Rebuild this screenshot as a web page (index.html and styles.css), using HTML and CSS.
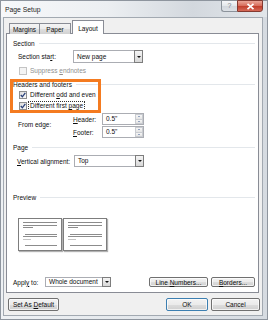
FILE: index.html
```html
<!DOCTYPE html>
<html>
<head>
<meta charset="utf-8">
<link rel="stylesheet" href="styles.css">
</head>
<body>
<div class="window">
  <div class="titlebar">
    <span class="title">Page Setup</span>
    <div class="caption">
      <div class="cbtn help">?</div>
      <div class="cbtn close">
        <svg width="9" height="7" viewBox="0 0 9 7"><path d="M1.5 0.8 L7.5 6.2 M7.5 0.8 L1.5 6.2" stroke="#fff" stroke-width="1.7" fill="none"/></svg>
      </div>
    </div>
  </div>
  <div class="client">
    <div class="tabs">
      <div class="tab t-margins">Margins</div>
      <div class="tab t-paper">Paper</div>
      <div class="tab active">Layout</div>
    </div>
    <div class="panel">
      <div class="ghead g-section">Section</div>
      <div class="row r-start">
        <span class="lbl w-start">Section sta<u>r</u>t:</span>
        <div class="select s-wide"><span class="val">New page</span><span class="arrow"></span></div>
      </div>
      <div class="row r-check r-suppress">
        <span class="cb disabled"></span><span class="cbtext dis">Suppress <u>e</u>ndnotes</span>
      </div>
      <div class="ghead g-hf">Headers and footers</div>
      <div class="row r-check r-cb1">
        <span class="cb"><svg width="6" height="6" viewBox="0 0 6 6"><path d="M0.8 3 L2.4 4.8 L5.3 0.9" stroke="#273f78" stroke-width="1.3" fill="none"/></svg></span><span class="cbtext">Different <u>o</u>dd and even</span>
      </div>
      <div class="row r-check r-cb2">
        <span class="cb"><svg width="6" height="6" viewBox="0 0 6 6"><path d="M0.8 3 L2.4 4.8 L5.3 0.9" stroke="#273f78" stroke-width="1.3" fill="none"/></svg></span><span class="cbtext focus">Different first <u>p</u>age</span>
      </div>
      <div class="edge">
        <span class="lbl w-start">From edge:</span>
        <div class="edge-rows">
          <div class="erow"><span class="lbl w-hdr"><u>H</u>eader:</span><div class="spin"><span class="val">0.5"</span><span class="spinbtns"><i class="up"></i><i class="dn"></i></span></div></div>
          <div class="erow"><span class="lbl w-hdr"><u>F</u>ooter:</span><div class="spin"><span class="val">0.5"</span><span class="spinbtns"><i class="up"></i><i class="dn"></i></span></div></div>
        </div>
      </div>
      <div class="ghead g-page">Page</div>
      <div class="row r-valign">
        <span class="lbl w-valign"><u>V</u>ertical alignment:</span>
        <div class="select s-wide s-v"><span class="val">Top</span><span class="arrow"></span></div>
      </div>
      <div class="ghead g-preview">Preview</div>
      <div class="previews">
        <div class="ppage"><svg width="42" height="31" viewBox="0 0 42 31"><g stroke-width="1" shape-rendering="crispEdges"><path d="M4 3.5H38M4 6.5H38M4 8.5H14M6 15.5H38M4 17.5H38M6 26.5H38" stroke="#8c8c8c"/><path d="M4 20.5H12" stroke="#c4c4c4"/></g></svg></div>
        <div class="ppage"><svg width="42" height="31" viewBox="0 0 42 31"><g stroke-width="1" shape-rendering="crispEdges"><path d="M4 3.5H38M4 6.5H38M4 8.5H14M6 15.5H38M4 17.5H38M6 26.5H38" stroke="#8c8c8c"/><path d="M4 20.5H12" stroke="#c4c4c4"/></g></svg></div>
      </div>
      <div class="row r-apply">
        <span class="lbl w-apply">Appl<u>y</u> to:</span>
        <div class="select s-apply"><span class="val">Whole document</span><span class="arrow"></span></div>
        <span class="grow"></span>
        <button class="btn b-line">Line <u>N</u>umbers...</button>
        <button class="btn b-borders"><u>B</u>orders...</button>
      </div>
      <div class="highlight"></div>
    </div>
    <div class="footer">
      <button class="btn b-default">Set As <u>D</u>efault</button>
      <span class="grow"></span>
      <button class="btn b-ok">OK</button>
      <button class="btn b-cancel">Cancel</button>
    </div>
  </div>
</div>
</body>
</html>
```
FILE: styles.css
```css
* { box-sizing: border-box; }
html, body { margin: 0; padding: 0; }
body {
  width: 268px; height: 320px; overflow: hidden; background: #fff;
  font-family: "Liberation Sans", Arial, sans-serif; font-size: 6.5px; color: #0e0e0e;
}
u { text-decoration-thickness: 0.6px; text-underline-offset: 1px; }
.window {
  width: 268px; height: 320px; border: 1px solid #8e959e;
  background: linear-gradient(to right, #eef1f4 0%, #e4e8ec 50%, #d6dbe1 100%);
  display: flex; flex-direction: column;
}
.titlebar {
  height: 16px; flex-shrink: 0; display: flex; align-items: flex-start;
  background: linear-gradient(to right, #f7f8fa 0%, #eceff2 40%, #d3d8de 72%, #e2e6ea 100%);
}
.title { margin: 5px 0 0 4px; font-size: 6.8px; line-height: 8px; color: #1e1e1e; }
.caption { margin-left: auto; margin-right: 4px; margin-top: -1px; display: flex; }
.cbtn { height: 12px; border: 1px solid #8c939b; }
.help {
  width: 16px; border-right: none; border-radius: 0 0 0 3px;
  background: linear-gradient(#f6f7f9, #e2e6ea 50%, #d2d7dd 51%, #dde1e6);
  color: #7a828b; text-align: center; font-size: 7px; line-height: 10px;
}
.close {
  width: 26px; border-color: #843a31; border-radius: 0 0 3px 0;
  background: linear-gradient(#eaa597, #d8705f 45%, #c2402e 55%, #d66a58);
  display: flex; align-items: center; justify-content: center;
}
.client {
  flex: 1; margin: 0 4px 3px 2px; border: 1px solid #a2a9b1; background: #f0f0f0;
  padding: 2px 3px 0 2px; display: flex; flex-direction: column;
}
.tabs {
  display: flex; align-items: flex-end; height: 14px; padding-left: 3px;
  margin-bottom: -1px; position: relative; z-index: 1; flex-shrink: 0;
}
.tab {
  height: 11px; border: 1px solid #898c95; border-bottom: none;
  background: linear-gradient(#f4f4f4, #ececec 50%, #dedede 51%, #d2d2d2);
  text-align: center; line-height: 10px; padding-top: 1px;
}
.t-margins { width: 31px; margin-right: -1px; }
.t-paper { width: 32px; }
.tab.active { height: 14px; width: 32px; margin-left: 1px; background: #fff; padding-top: 4px; line-height: 8px; }
.panel {
  height: 260px; flex-shrink: 0; border: 1px solid #898c95; background: #fff;
  position: relative; padding: 4px 3px 0 6px; display: flex; flex-direction: column;
}
.ghead { display: flex; align-items: center; height: 10px; flex-shrink: 0; }
.ghead::after { content: ""; flex: 1; border-top: 1px solid #e3e7eb; margin-left: 4px; }
.g-hf { margin-top: 4px; }
.g-page { margin-top: 4px; }
.g-preview { margin-top: 25px; }
.row { display: flex; align-items: center; flex-shrink: 0; }
.lbl { flex-shrink: 0; white-space: nowrap; }
.r-start { margin: 2px 0 0 5px; height: 13px; }
.w-start { width: 55px; }
.select {
  display: flex; border: 1px solid #abadb3; background: #fff; height: 13px; flex-shrink: 0;
}
.select .val { flex: 1; padding-left: 3px; line-height: 11px; white-space: nowrap; }
.select .arrow {
  width: 9px; margin: -1px -1px -1px 0; border: 1px solid #7d7d7d;
  background: linear-gradient(#f4f4f4, #e6e6e6 50%, #d8d8d8);
  display: flex; align-items: center; justify-content: center;
}
.select .arrow::before {
  content: ""; border-left: 2px solid transparent; border-right: 2px solid transparent; border-top: 2px solid #111;
}
.s-wide { width: 70px; }
.r-check { height: 10px; margin: 1px 0 0 6px; }
.r-suppress { height: 9px; margin-top: 3px; }
.cb {
  width: 8px; height: 8px; border: 1px solid #8e8f8f; flex-shrink: 0;
  background: linear-gradient(135deg, #dcdcdc, #fbfbfb);
  display: flex; align-items: center; justify-content: center;
}
.cb.disabled { border-color: #c4c4c4; background: #f4f4f4; }
.cbtext { margin-left: 1px; white-space: nowrap; line-height: 8px; padding: 0 1px; border: 1px solid transparent; }
.cbtext.dis { color: #8f8f8f; }
.cbtext.focus { border: 1px dotted #333; }
.edge { display: flex; align-items: center; margin: 2px 0 0 5px; flex-shrink: 0; }
.edge .w-start { margin-top: -2px; }
.edge-rows { display: flex; flex-direction: column; gap: 1px; }
.erow { display: flex; align-items: center; height: 12px; }
.w-hdr { width: 29px; }
.spin { display: flex; width: 42px; height: 12px; border: 1px solid #abadb3; background: #fff; }
.spin .val { flex: 1; padding-left: 3px; line-height: 10px; }
.spinbtns { width: 8px; display: flex; flex-direction: column; }
.spinbtns i {
  flex: 1; border: 1px solid #c9ccd1; background: linear-gradient(#f6f6f6, #e4e4e4);
  display: flex; align-items: center; justify-content: center;
}
.spinbtns i + i { border-top: none; }
.spinbtns .up::before { content: ""; border-left: 1.5px solid transparent; border-right: 1.5px solid transparent; border-bottom: 1.5px solid #3a5a94; }
.spinbtns .dn::before { content: ""; border-left: 1.5px solid transparent; border-right: 1.5px solid transparent; border-top: 1.5px solid #3a5a94; }
.r-valign { margin: 3px 0 0 4px; height: 12px; }
.w-valign { width: 57px; }
.s-v { height: 12px; }
.s-v .val { line-height: 10px; }
.previews { display: flex; gap: 1px; margin: 16px 0 0 5px; flex-shrink: 0; }
.ppage {
  width: 44px; height: 33px; border: 1px solid #7d7d7d; background: #fff;
  box-shadow: 1px 1px 1px rgba(0, 0, 0, 0.3);
}
.ppage svg { display: block; }
.r-apply { margin-top: 26px; height: 10px; }
.w-apply { width: 32px; }
.s-apply { width: 66px; height: 10px; }
.s-apply .val { line-height: 8px; }
.grow { flex: 1; }
.btn {
  font: inherit; color: #0e0e0e; padding: 0; margin: 0; flex-shrink: 0;
  border: 1px solid #707070; border-radius: 2px;
  background: linear-gradient(#f2f2f2, #ebebeb 50%, #dddddd 51%, #cfcfcf);
  box-shadow: inset 0 0 0 1px rgba(255, 255, 255, 0.7);
  text-align: center; white-space: nowrap;
}
.b-line { width: 59px; height: 10px; line-height: 7px; }
.b-borders { width: 44px; height: 10px; line-height: 7px; margin-left: 3px; }
.footer { display: flex; padding: 5px 0 0 2px; margin-right: -1px; flex-shrink: 0; }
.b-default { width: 51px; height: 13px; }
.b-ok { width: 42px; height: 13px; border-color: #3c7fb1; }
.b-cancel { width: 49px; height: 13px; margin-left: 3px; }
.highlight {
  position: absolute; left: 3px; top: 45px; width: 91px; height: 34px;
  border: 3px solid #f47b20; pointer-events: none;
}
```
